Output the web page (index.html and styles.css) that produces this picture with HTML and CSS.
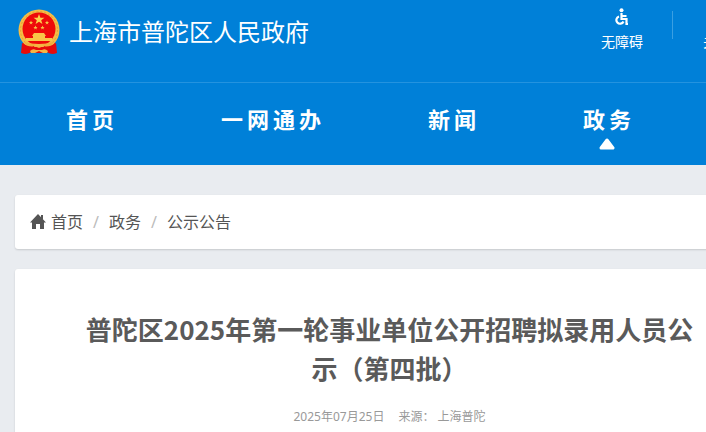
FILE: index.html
```html
<!DOCTYPE html>
<html lang="zh-CN">
<head>
  <meta charset="UTF-8">
  <meta name="viewport" content="width=device-width, initial-scale=1">
  <title>普陀区2025年第一轮事业单位公开招聘拟录用人员公示（第四批）</title>
  <link rel="stylesheet" href="styles.css">
</head>
<body>
<div class="page">

  <header class="header">
    <div class="header-top">
      <a class="logo" href="#">
        <svg class="emblem" viewBox="0 0 42 46" aria-hidden="true">
          <path d="M5 33 L4 44 Q9 46 13 43 L21 44 L29 43 Q33 46 38 44 L37 33z" fill="#e60b0b"/>
          <circle cx="21" cy="21" r="20.5" fill="#f5bd45"/>
          <circle cx="21" cy="21" r="18.5" fill="none" stroke="#e3a035" stroke-width="1" stroke-dasharray="2 2"/>
          <circle cx="21" cy="20" r="16.5" fill="#ee0a0a"/>
          <path d="M21 5l1.400 3.800h4l-3.200 2.400 1.200 3.900-3.400-2.300-3.400 2.300 1.200-3.900-3.200-2.400h4z" fill="#fbd24b"/>
          <g fill="#f9c648">
            <path id="star" d="M13 11.500l.6 1.500h1.500l-1.200 1 .4 1.500-1.300-.9-1.300.9.400-1.500-1.200-1h1.500z"/>
            <use href="#star" x="16"/>
            <use href="#star" x="4.500" y="5"/>
            <use href="#star" x="11.500" y="5"/>
            <path d="M16 24h10l2 3H14zM15 27h12v2h7v3H8v-3h7z"/>
          </g>
          <path d="M6 33q15 4 30 0l-3 4q-12 4-24 0z" fill="#f2ae3c"/>
          <path d="M4 34q8 5 12 3l5 2 5-2q4 2 12-3l1 10q-5 2-10-1l-8 1-8-1q-5 3-10 1z" fill="#e60b0b"/>
          <path d="M12 42q3-3 6-1h6q3-2 6 1l-1 2h-4l-4-2-4 2h-4zM17 35h8l1 3H16z" fill="#f5b544"/>
        </svg>
        <span>上海市普陀区人民政府</span>
      </a>
      <div class="tools">
        <a class="tool" href="#">
          <svg class="tool-icon" viewBox="0 0 14 18" aria-hidden="true">
            <circle cx="6.500" cy="2.200" r="2" fill="#fff"/>
            <path d="M6.500 5v6h5v5h1.500M7 8h4.500M4 8.500a3.700 3.700 0 1 0 4.500 5" fill="none" stroke="#fff" stroke-width="2.200"/>
          </svg>
          <span>无障碍</span>
        </a>
        <a class="tool" href="#">
          <span class="tool-icon"></span>
          <span>关怀版</span>
        </a>
      </div>
    </div>

    <nav class="nav">
      <a href="#">首页</a>
      <a href="#">一网通办</a>
      <a href="#">新闻</a>
      <a class="active" href="#">政务
        <svg class="arrow" viewBox="0 0 16 12" aria-hidden="true">
          <path d="M8 2L14 10H2z" fill="#fff" stroke="#fff" stroke-width="3" stroke-linejoin="round"/>
        </svg>
      </a>
    </nav>
  </header>

  <main class="content">
    <nav class="card breadcrumb">
      <svg class="home" viewBox="0 0 16 16" aria-hidden="true">
        <path d="M8 0L16 8.500H14V15H10V10H6V15H2V8.500H0z" fill="#555"/>
        <path d="M11 1h2v4h-2z" fill="#555"/>
      </svg>
      <a href="#">首页</a>
      <span class="sep">/</span>
      <a href="#">政务</a>
      <span class="sep">/</span>
      <a href="#">公示公告</a>
    </nav>

    <article class="card article">
      <h1>普陀区2025年第一轮事业单位公开招聘拟录用人员公示（第四批）</h1>
      <div class="meta">
        <span>2025年07月25日</span>
        <span>来源： 上海普陀</span>
      </div>
    </article>
  </main>

</div>
</body>
</html>
```

FILE: styles.css
```css
* {
  box-sizing: border-box;
}

body {
  margin: 0;
  background-color: #e9ecf0;
  color: #555;
  font-family: "Noto Sans", "Noto Sans CJK SC", sans-serif;
  overflow: hidden;
}

a {
  color: inherit;
  text-decoration: none;
}

/* the site keeps its desktop width on narrow windows */
.page {
  min-width: 779px;
}

.header {
  background-color: #0080d8;
  color: #fff;
}

.header-top {
  display: flex;
  justify-content: space-between;
  align-items: flex-start;
  padding: 8px 4px 26px 18px;
  border-bottom: 1px solid #2493df;
}

.logo {
  display: flex;
  align-items: center;
  gap: 9px;
  font-size: 24px;
  line-height: 48px;
}

.emblem {
  width: 42px;
  height: 46px;
}

.tools {
  display: flex;
}

.tool {
  display: flex;
  flex-direction: column;
  align-items: center;
  width: 102px;
  font-size: 14px;
  line-height: 20px;
  background: linear-gradient(#3a9fe2, #3a9fe2) right 3px / 1px 28px no-repeat;
}

.tool-icon {
  width: 14px;
  height: 18px;
  margin-bottom: 6px;
}

.nav {
  display: flex;
  gap: 103px;
  padding: 20px 66px 29px;
  font-size: 22px;
  font-weight: bold;
  line-height: 33px;
  letter-spacing: 4px;
}

.nav a {
  position: relative;
  white-space: nowrap;
}

.arrow {
  position: absolute;
  top: 35px;
  left: 16px;
  width: 16px;
  height: 12px;
}

.content {
  padding: 30px 15px 0;
}

.card {
  background-color: #fff;
  border-radius: 3px;
  box-shadow: 0 1px 2px rgba(0, 0, 0, 0.15);
}

.breadcrumb {
  display: flex;
  align-items: center;
  margin-bottom: 20px;
  padding: 15px;
  font-size: 16px;
  line-height: 24px;
}

.home {
  width: 16px;
  height: 16px;
  margin-right: 5px;
}

.sep {
  padding: 0 10px;
  color: #bbb;
}

.article {
  padding: 40px 60px;
  text-align: center;
}

h1 {
  margin: 0 0 20px;
  color: #5a5a5a;
  font-family: "Noto Sans CJK SC", sans-serif;
  font-size: 26px;
  line-height: 39px;
}

.meta {
  display: flex;
  justify-content: center;
  gap: 14px;
  font-size: 12px;
  line-height: 20px;
  color: #999;
}
```
